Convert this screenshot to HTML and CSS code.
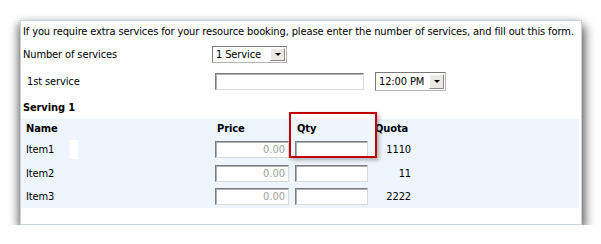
FILE: index.html
```html
<!DOCTYPE html>
<html lang="en">
<head>
    <meta charset="UTF-8">
    <title>Resource booking - extra services</title>
    <link rel="stylesheet" href="styles.css">
</head>
<body>
    <div class="svc-panel">
        <div class="svc-intro">If you require extra services for your resource booking, please enter the number of services, and fill out this form.</div>

        <!-- number of services -->
        <div class="svc-row svc-row-count">
            <span class="svc-label">Number of services</span>
            <div class="svc-combo svc-combo-count">
                <span class="svc-combo-text">1 Service</span>
                <span class="svc-combo-btn"><i class="svc-arrow"></i></span>
            </div>
        </div>

        <!-- first service date / time -->
        <div class="svc-row svc-row-date">
            <span class="svc-label svc-label-indent">1st service</span>
            <div class="svc-date-controls">
                <input class="svc-input svc-input-date" type="text">
                <div class="svc-combo svc-combo-time">
                    <span class="svc-combo-text">12:00 PM</span>
                    <span class="svc-combo-btn"><i class="svc-arrow"></i></span>
                </div>
            </div>
        </div>

        <div class="svc-serving">Serving 1</div>

        <div class="svc-items">
            <div class="svc-items-row svc-items-head">
                <span class="svc-col-name">Name</span>
                <span class="svc-col-price">Price</span>
                <span class="svc-col-qty">Qty</span>
                <span class="svc-col-quota">Quota</span>
            </div>
            <div class="svc-items-row">
                <span class="svc-col-name">Item1 <i class="svc-blank"></i></span>
                <span class="svc-col-price"><input class="svc-input svc-input-price" type="text" value="0.00" disabled></span>
                <span class="svc-col-qty"><input class="svc-input svc-input-qty" type="text"></span>
                <span class="svc-col-quota">1110</span>
            </div>
            <div class="svc-items-row">
                <span class="svc-col-name">Item2</span>
                <span class="svc-col-price"><input class="svc-input svc-input-price" type="text" value="0.00" disabled></span>
                <span class="svc-col-qty"><input class="svc-input svc-input-qty" type="text"></span>
                <span class="svc-col-quota">11</span>
            </div>
            <div class="svc-items-row svc-items-last">
                <span class="svc-col-name">Item3</span>
                <span class="svc-col-price"><input class="svc-input svc-input-price" type="text" value="0.00" disabled></span>
                <span class="svc-col-qty"><input class="svc-input svc-input-qty" type="text"></span>
                <span class="svc-col-quota">2222</span>
            </div>
        </div>

        <!-- highlight round the Qty column -->
        <div class="svc-highlight"></div>
    </div>
</body>
</html>
```

FILE: styles.css
```css
body {
    margin: 0;
    background: #ffffff;
    font-family: "DejaVu Sans Condensed", "DejaVu Sans", sans-serif;
    font-stretch: semi-condensed;
    font-size: 11px;
    letter-spacing: -0.12px;
    color: #000000;
}

.svc-panel {
    position: relative;
    box-sizing: border-box;
    width: 562px;
    height: 205px;
    margin: 20px 0 0 20px;
    background: #ffffff;
    border: 1px solid #c9d2de;
    box-shadow: 3px 6px 10px rgba(0, 0, 0, 0.6), -3px 3px 8px rgba(0, 0, 0, 0.35);
}

.svc-intro {
    padding: 3px 2px 0 2px;
    line-height: 16px;
    white-space: nowrap;
}

.svc-row {
    display: grid;
    grid-template-columns: 191px auto;
    align-items: center;
}

.svc-row-count {
    margin-top: 6px;
}

.svc-row-date {
    margin-top: 9px;
}

.svc-label {
    padding-left: 2px;
}

.svc-label-indent {
    padding-left: 6px;
}

.svc-date-controls {
    display: flex;
    align-items: center;
    gap: 11px;
}

.svc-combo {
    display: flex;
    box-sizing: border-box;
    height: 17px;
    background: #ffffff;
    border: 1px solid;
    border-color: #7a7a7a #b5b5b5 #b5b5b5 #7a7a7a;
}

.svc-combo-count {
    width: 75px;
}

.svc-combo-time {
    width: 71px;
    height: 19px;
}

.svc-combo-text {
    flex: 1;
    padding-left: 3px;
    line-height: 15px;
}

.svc-combo-time .svc-combo-text {
    line-height: 17px;
}

.svc-combo-btn {
    display: flex;
    align-items: center;
    justify-content: center;
    box-sizing: border-box;
    width: 15px;
    margin: 1px;
    background: #ece9e4;
    border: 1px solid;
    border-color: #ffffff #8a8a8a #8a8a8a #ffffff;
}

.svc-arrow {
    width: 0;
    height: 0;
    border-left: 3px solid transparent;
    border-right: 3px solid transparent;
    border-top: 3px solid #000000;
}

.svc-input {
    box-sizing: border-box;
    height: 17px;
    margin: 0;
    padding: 0 3px;
    font-family: inherit;
    font-size: 11px;
    background: #ffffff;
    border: 1px solid;
    border-color: #7c7c7c #d8d8d8 #d8d8d8 #7c7c7c;
    box-shadow: inset 1px 1px 0 #b0b0b0;
    outline: none;
}

.svc-input-date {
    width: 149px;
    margin-left: 3px;
}

.svc-input-price {
    width: 74px;
    text-align: right;
    color: #a0a0a0;
}

.svc-input-qty {
    width: 73px;
}

.svc-serving {
    margin-top: 10px;
    padding-left: 2px;
    line-height: 14px;
    font-weight: bold;
}

.svc-items {
    margin: 4px 2px 0 0;
    background: #eef5fc;
}

.svc-items-row {
    display: grid;
    grid-template-columns: 194px 80px 80px 36px;
    align-items: center;
    height: 24px;
}

.svc-items-head {
    height: 18px;
    font-weight: bold;
}

.svc-items-last {
    height: 23px;
}

.svc-items-row input {
    display: block;
}

.svc-col-name {
    display: flex;
    align-items: center;
    padding-left: 5px;
}

.svc-items-head .svc-col-price,
.svc-items-head .svc-col-qty {
    padding-left: 2px;
}

.svc-col-quota {
    text-align: right;
}

.svc-items-head .svc-col-quota {
    text-align: left;
}

.svc-blank {
    display: inline-block;
    width: 8px;
    height: 19px;
    margin-left: 16px;
    background: #ffffff;
}

.svc-highlight {
    position: absolute;
    top: 91px;
    left: 268px;
    box-sizing: border-box;
    width: 88px;
    height: 46px;
    border: 2px solid #c00000;
    box-shadow: 2px 2px 4px rgba(0, 0, 0, 0.3);
}
```
